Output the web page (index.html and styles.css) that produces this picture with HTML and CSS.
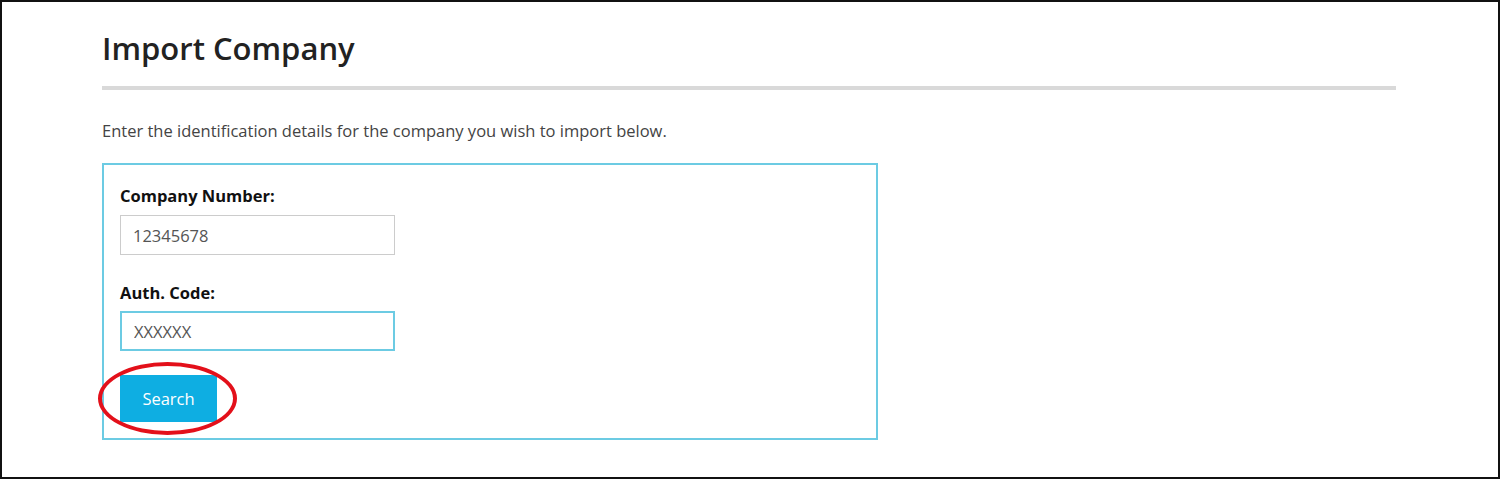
FILE: index.html
```html
<!DOCTYPE html>
<html lang="en">
<head>
    <meta charset="UTF-8">
    <meta name="viewport" content="width=device-width, initial-scale=1.0">
    <title>Import Company</title>
    <link rel="stylesheet" href="styles.css">
</head>
<body>
    <div class="frame">
        <div class="page">
            <h1>Import Company</h1>
            <div class="rule"></div>
            <p class="intro">Enter the identification details for the company you wish to import below.</p>

            <form class="panel" onsubmit="return false;">
                <label for="company-number">Company Number:</label>
                <input type="text" id="company-number" class="field" value="12345678">

                <label for="auth-code">Auth. Code:</label>
                <input type="text" id="auth-code" class="field active" value="XXXXXX">

                <div class="actions">
                    <button type="submit" class="btn-search">Search</button>
                    <span class="highlight"></span>
                </div>
            </form>
        </div>
    </div>
</body>
</html>
```

FILE: styles.css
```css
html, body {
    margin: 0;
    background: #fff;
}
.frame {
    box-sizing: border-box;
    width: 1500px;
    height: 479px;
    border: 2px solid #111;
    padding: 0 0 0 100px;
    font-family: "Open Sans", "Noto Sans", sans-serif;
    color: #222;
}
.page {
    width: 1294px;
}
h1 {
    margin: 22px 0 0;
    font-size: 31px;
    line-height: 48px;
    font-weight: 600;
    color: #222;
}
.rule {
    height: 4px;
    margin-top: 14px;
    background: #d9d9d9;
}
.intro {
    margin: 30px 0 0;
    font-size: 16.5px;
    line-height: 22px;
    color: #444;
}
.panel {
    box-sizing: border-box;
    width: 776px;
    height: 277px;
    margin-top: 21px;
    padding: 20px 16px 0;
    border: 2px solid #6ccbe3;
}
label {
    display: block;
    font-size: 16.5px;
    font-weight: 700;
    line-height: 22px;
    color: #111;
}
.field {
    box-sizing: border-box;
    display: block;
    width: 275px;
    height: 40px;
    margin: 8px 0 27px;
    padding: 0 12px;
    border: 1px solid #ccc;
    font-family: "Open Sans", "Noto Sans", sans-serif;
    font-size: 16.5px;
    color: #555;
    outline: none;
}
.field.active {
    border: 2px solid #6ccbe3;
    margin-top: 7px;
    margin-bottom: 24px;
}
.actions {
    position: relative;
    width: 97px;
}
.btn-search {
    width: 97px;
    height: 47px;
    border: none;
    background: #0eaee2;
    color: #fff;
    font-family: "Open Sans", "Noto Sans", sans-serif;
    font-size: 16.5px;
    cursor: pointer;
}
.highlight {
    position: absolute;
    left: -22px;
    top: -13px;
    width: 131px;
    height: 65px;
    border: 4px solid #e3101a;
    border-radius: 50%;
    pointer-events: none;
}
```
